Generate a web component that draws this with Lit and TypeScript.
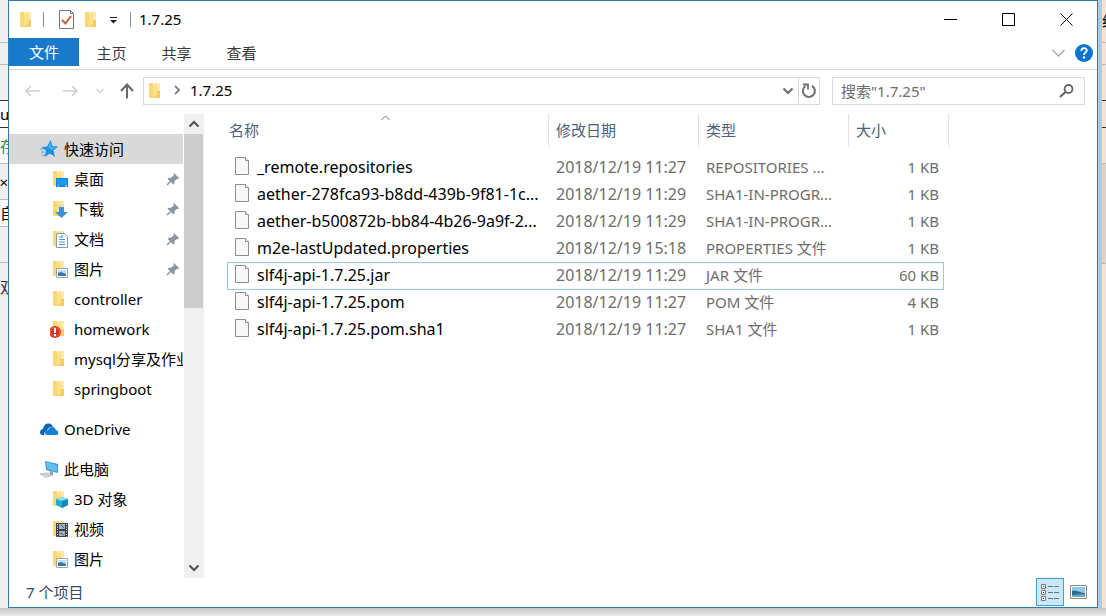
import { LitElement, html, css, svg, nothing } from "lit";
import { customElement, state } from "lit/decorators.js";

type NavItem = { label: string; icon: string; root?: boolean; pinned?: boolean; gap?: boolean };
type FileRow = { name: string; date: string; type: string; size: string };

const NAV: NavItem[] = [
  { label: "快速访问", icon: "star", root: true },
  { label: "桌面", icon: "desktop", pinned: true },
  { label: "下载", icon: "download", pinned: true },
  { label: "文档", icon: "document", pinned: true },
  { label: "图片", icon: "picture", pinned: true },
  { label: "controller", icon: "folder" },
  { label: "homework", icon: "alert" },
  { label: "mysql分享及作业", icon: "folder" },
  { label: "springboot", icon: "folder" },
  { label: "OneDrive", icon: "cloud", root: true, gap: true },
  { label: "此电脑", icon: "pc", root: true, gap: true },
  { label: "3D 对象", icon: "cube" },
  { label: "视频", icon: "film" },
  { label: "图片", icon: "picture" },
];

const FILES: FileRow[] = [
  { name: "_remote.repositories", date: "2018/12/19 11:27", type: "REPOSITORIES ...", size: "1 KB" },
  { name: "aether-278fca93-b8dd-439b-9f81-1c...", date: "2018/12/19 11:29", type: "SHA1-IN-PROGR...", size: "1 KB" },
  { name: "aether-b500872b-bb84-4b26-9a9f-2...", date: "2018/12/19 11:29", type: "SHA1-IN-PROGR...", size: "1 KB" },
  { name: "m2e-lastUpdated.properties", date: "2018/12/19 15:18", type: "PROPERTIES 文件", size: "1 KB" },
  { name: "slf4j-api-1.7.25.jar", date: "2018/12/19 11:29", type: "JAR 文件", size: "60 KB" },
  { name: "slf4j-api-1.7.25.pom", date: "2018/12/19 11:27", type: "POM 文件", size: "4 KB" },
  { name: "slf4j-api-1.7.25.pom.sha1", date: "2018/12/19 11:27", type: "SHA1 文件", size: "1 KB" },
];

const folderShape = svg`
  <path d="M3 1h11v15H3z" fill="#ffe9a6"/>
  <path d="M3 1h4v15H3z" fill="#f8d775"/>
  <path d="M7 4l4-3v12l-4 3z" fill="#ffe08a"/>
  <path d="M11 9h3v7H7l4-3z" fill="#f3cc66"/>`;

const GLYPHS: Record<string, unknown> = {
  folder: folderShape,
  star: svg`<path d="M10.500 0l2 6 5.500.5-4.500 4 1.500 6.500-5-3.500L4.500 17l1.600-6.300L1.500 7l5.700-.6z" fill="#1c8fe3"/><path d="M10.300 2.500l1.400 4.500 4 .3-3.500 2.700-4.200-3z" fill="#4db4f5"/><path d="M0 9h4M1 12h4M2 15h3" stroke="#4aa6ea"/>`,
  desktop: svg`${folderShape}<path d="M6 8h12v9H6z" fill="#1286dc"/><path d="M7 9h10v6H7z" fill="#1b9af0"/><path d="M8 16h1M15 16h2" stroke="#fff"/>`,
  download: svg`${folderShape}<path d="M9 7h5v5h4l-6.500 6L5 12h4z" fill="#3b8fe0"/>`,
  document: svg`${folderShape}<path d="M6.500 3.500h8l3 3v11h-11z" fill="#fff" stroke="#8a9bab"/><path d="M9 7h3M9 9.500h6M9 12h6M9 14.500h6M12 5v3" stroke="#4a94d0"/>`,
  picture: svg`${folderShape}<path d="M6.500 8.500h11v9h-11z" fill="#fff" stroke="#9aa4ad"/><path d="M8 10h8v6H8z" fill="#b9e0f6"/><path d="M8 13l3-1 5 2v2H8z" fill="#3b78a8"/>`,
  alert: svg`${folderShape}<circle cx="5" cy="12" r="6" fill="#d5301f"/><circle cx="5" cy="12" r="4.500" fill="none" stroke="#ee6a4e"/><path d="M5 8v5M5 14v2" stroke="#fff" stroke-width="2"/>`,
  cloud: svg`<path d="M0 12.500c0-2 1.500-3.500 3-3.500.5-4 3-6 6-5.500 2 .2 3.300 1.500 4 3-4 .2-5.500 2-5.800 4.500C4.500 11 4 13.500 4.500 15 2 15.500 0 14.500 0 12.500z" fill="#0a64b4"/><path d="M5 13c0-1.800 1.500-3 3.200-3C8.600 8 10 7 12 7c2 0 3.500 1.200 3.800 3.200 1.500.1 2.700 1.100 2.700 2.500 0 1.500-1 2.300-2.500 2.300H7.500C6 15 5 14.200 5 13z" fill="#1380d8"/>`,
  pc: svg`<path d="M5 1l13 3v9L6 10z" fill="#3d8fc9"/><path d="M6 2l11 3v7L7 9z" fill="#62c0f2"/><path d="M10 11l3 1v3h-3z" fill="#8d9ba5"/><path d="M0 14l8-1 5 2-7 2.500z" fill="#e6e9ec" stroke="#9ba5ad" stroke-width=".7"/><path d="M3 14.500l6 .8M6 14l4 1.300" stroke="#aab4bb" stroke-width=".6"/>`,
  cube: svg`${folderShape}<path d="M6 9l6-2 6 2v6l-6 3-6-3z" fill="#25a9d4"/><path d="M6 9l6-2 6 2-6 2z" fill="#8be2f4"/><path d="M12 11v7l6-3V9z" fill="#138bb8"/>`,
  film: svg`${folderShape}<path d="M6 3h12v14H6z" fill="#3b3e43"/><path d="M9 4h6v5H9zM9 11h6v5H9z" fill="#9fb2c4"/><path d="M11 5l3 3M10 13l4 2" stroke="#4d6479"/><path d="M7.500 4v13M16.500 4v13" stroke="#fff" stroke-dasharray="1 1.500"/>`,
};

const icon = (name: string) => html`<svg class="ico" viewBox="0 0 18 18" aria-hidden="true">${GLYPHS[name]}</svg>`;

const pin = html`<svg class="pin" viewBox="0 0 14 14" aria-hidden="true">
  <path d="M8 1l5 5-1 1.200-1.200-.3L8.500 9v2.500L7.400 12.500 1.600 6.700l1-1H5L8 3.200 7.400 1.700z" fill="#8b959d"/><path d="M4.500 9.500L1 13" stroke="#8b959d" stroke-width="1.500"/></svg>`;

const page = html`<svg class="page" viewBox="0 0 16 20" aria-hidden="true">
  <path d="M1.500.5h10l3 3v14h-13z" fill="#f8f8f8" stroke="#8f8f8f"/><path d="M11.500.5v3h3" fill="#fff" stroke="#8f8f8f"/></svg>`;

@customElement("app-root")
export class AppRoot extends LitElement {
  @state() private current = "快速访问";
  @state() private focused = "slf4j-api-1.7.25.jar";

  static styles = css`
    :host {
      display: grid;
      grid-template-columns: 8px minmax(0, 1fr) 8px;
      grid-template-rows: minmax(0, 1fr) 8px;
      height: 100vh;
      overflow: hidden;
      background: #e4e5e7;
      font: 15px/20px "Noto Sans", "Noto Sans CJK SC", sans-serif;
      color: #000;
    }
    * { box-sizing: border-box; }
    button, a, input { font: inherit; color: inherit; }
    button { border: 0; padding: 0; background: none; display: flex; align-items: center; justify-content: center; }
    a { text-decoration: none; }
    svg { display: block; flex: none; fill: none; }
    ul { list-style: none; margin: 0; padding: 0; }
    .edge { overflow: hidden; background: #efeff0; display: flex; flex-direction: column; }
    .edge.right { background: #efe3dc; border-left: 4px solid #b5c9d9; }
    .edge.bottom { grid-column: 1 / -1; background: linear-gradient(#c3c5c7, #ececec); }
    .strip { height: 36px; flex: none; overflow: hidden; white-space: nowrap; border-bottom: 1px solid #b9bdc1; display: flex; align-items: center; }
    .strip.first { height: 43px; }
    .strip.short { height: 22px; }
    .strip.mid { height: 27px; }
    .strip.tall { height: 48px; }
    .strip.long { height: 100px; background: #dcd3d0; }
    .strip.white { background: #fafafa; }
    .strip.dark { border-bottom-color: #333; }
    .strip.green { color: #2f8b3a; }
    .strip.last { border: 0; color: #352446; }
    .strip.end { justify-content: flex-end; }

    .window { border: 1px solid #2f7db0; background: #fff; display: flex; flex-direction: column; min-width: 0; min-height: 0; }
    .title { display: flex; align-items: center; height: 37px; flex: none; padding: 0 2px 0 8px; }
    .title h1 { font: inherit; margin: 0 auto 0 8px; padding-bottom: 2px; }
    .ico { width: 18px; height: 18px; }
    .bar { width: 1px; height: 15px; background: #8d8d8d; }
    .quick { display: flex; align-items: center; }
    .quick .bar { margin: 0 14px 0 8px; }
    .quick .more { width: 24px; margin-right: 5px; }
    .caption { width: 58px; height: 37px; }

    .tabs { display: flex; height: 32px; flex: none; border-bottom: 1px solid #dadbdc; padding-right: 4px; align-items: flex-start; }
    .tab { height: 29px; width: 65px; color: #383838; }
    .tab.file { height: 28px; width: 70px; background: #1979ca; color: #fff; }
    .tabs .fold { margin-left: auto; width: 18px; height: 30px; margin-right: 8px; }
    .tabs .help { height: 30px; }

    .address { display: flex; flex: none; height: 44px; padding: 7px 12px 9px 6px; align-items: stretch; }
    .move { width: 35px; }
    .move.wide { width: 40px; }
    .move.thin { width: 20px; }
    .move.up { width: 33px; }
    .path { flex: 1; min-width: 0; display: flex; align-items: center; border: 1px solid #d9d9d9; padding-left: 2px; }
    .path .crumb { margin-left: 9px; padding-bottom: 2px; }
    .path .arrow { margin-left: 10px; margin-bottom: 2px; }
    .path .drop { margin-left: auto; width: 20px; height: 26px; }
    .path .reload { width: 21px; height: 26px; border-left: 1px solid #d9d9d9; }
    .search { width: 253px; margin-left: 12px; display: flex; align-items: center; border: 1px solid #d9d9d9; padding: 0 10px 0 8px; }
    .search input { flex: 1; min-width: 0; border: 0; padding: 0; outline: 0; background: none; }
    .search input::placeholder { color: #6d6d6d; opacity: 1; }

    .main { flex: 1; min-height: 0; display: flex; }
    .side { width: 195px; flex: none; display: flex; }
    .tree { flex: 1; min-width: 0; overflow: hidden; padding: 20px 1px 0 0; }
    .tree .gap { margin-top: 10px; }
    .node { display: flex; align-items: center; height: 30px; padding-left: 41px; gap: 6px; white-space: nowrap; overflow: hidden; }
    .node.root { padding-left: 31px; }
    .node.current { background: #d9d9d9; }
    .node .pin { margin-left: auto; margin-right: 3px; }
    .pin { width: 14px; height: 14px; }
    .scroll { width: 20px; flex: none; background: #f0f0f0; display: flex; flex-direction: column; }
    .scroll button { height: 20px; width: 20px; }
    .thumb { width: 19px; height: 174px; background: #cdcdcd; margin-bottom: auto; }

    .files { flex: 1; min-width: 0; overflow: hidden; padding-left: 23px; }
    table, thead, tbody { display: block; }
    tr { display: grid; cursor: default; }
    thead tr { height: 33px; grid-template-columns: 322px 150px 150px 100px; margin-bottom: 7px; }
    th { font-weight: normal; text-align: left; color: #4c607a; padding: 6px 7px 0; border-right: 1px solid #e3e3e3; }
    th:first-child { padding-left: 2px; display: grid; grid-template-columns: 152px 1fr; }
    .sort { align-self: start; margin-top: -5px; }
    tbody tr { width: 717px; height: 27px; align-items: center; border: 1px solid transparent; grid-template-columns: 321px 150px 150px 1fr; }
    tbody tr.focused { height: 28px; margin-bottom: -1px; border-color: #99c9ea; }
    td { padding: 0 0 2px 7px; color: #6d6d6d; white-space: nowrap; }
    td:first-child { color: #000; display: flex; align-items: center; gap: 7px; padding-left: 6px; }
    td:first-child, td:nth-child(2) { font-size: 16px; }
    td:last-child { text-align: right; padding-right: 4px; }
    .page { width: 16px; height: 20px; }

    .status { flex: none; height: 29px; display: flex; align-items: flex-start; padding: 0 5px 0 17px; color: #33496a; }
    .status span { padding-top: 4px; }
    .status .view { width: 28px; height: 28px; border: 1px solid transparent; }
    .status .view.on { background: #cbe8f8; border-color: #3fa0d0; margin-left: auto; }
  `;

  render() {
    return html`
      <div class="edge" aria-hidden="true">
        <div class="strip first"></div>
        <div class="strip short"></div>
        <div class="strip dark"></div>
        <div class="strip mid dark white">u</div>
        <div class="strip green white">存</div>
        <div class="strip end">×</div>
        <div class="strip mid white">自</div>
        <div class="strip"></div>
        <div class="strip tall last">双</div>
      </div>
      <main class="window">
        <header class="title">
          <div class="quick">
            ${icon("folder")}
            <span class="bar"></span>
            <button aria-label="属性">
              <svg width="17" height="19" viewBox="0 0 17 19"><path d="M1.500.5h11l3 3v15h-14z" fill="#fff" stroke="#777"/><path d="M12.500.5v3h3" stroke="#777"/><path d="M4 10l3.500 3.500L13 6" stroke="#c65f38" stroke-width="2"/></svg>
            </button>
            <button aria-label="新建文件夹"><svg width="26" height="18" viewBox="-7 0 26 18">${folderShape}</svg></button>
            <button class="more" aria-label="自定义快速访问工具栏">
              <svg width="9" height="8" viewBox="0 0 9 8"><path d="M1 1.500h7" stroke="#222"/><path d="M1 4h7L4.500 7.500z" fill="#222"/></svg>
            </button>
          </div>
          <span class="bar"></span>
          <h1>1.7.25</h1>
          <button class="caption" aria-label="最小化"><svg width="13" height="13"><path d="M0 6.500h13" stroke="#000"/></svg></button>
          <button class="caption" aria-label="最大化"><svg width="13" height="13"><path d="M.5.5h12v12H.5z" stroke="#000"/></svg></button>
          <button class="caption" aria-label="关闭"><svg width="13" height="13"><path d="M.5.5l12 12M12.500.5l-12 12" stroke="#000"/></svg></button>
        </header>
        <nav class="tabs">
          <button class="tab file">文件</button>
          <button class="tab">主页</button>
          <button class="tab">共享</button>
          <button class="tab">查看</button>
          <button class="fold" aria-label="展开功能区"><svg width="13" height="8"><path d="M.5 1l6 6 6-6" stroke="#a5a9ad" stroke-width="1.400"/></svg></button>
          <button class="help" aria-label="帮助">
            <svg width="18" height="18"><circle cx="9" cy="9" r="9" fill="#0c73cf"/><path d="M6.300 7c0-4 5.500-3.500 5.500-.6C11.800 8.400 9 8.500 9 11" stroke="#fff" stroke-width="1.800"/><circle cx="9" cy="13.500" r="1.200" fill="#fff"/></svg>
          </button>
        </nav>
        <div class="address">
          <button class="move" aria-label="后退"><svg width="15" height="12"><path d="M15 6H1M6 1L1 6l5 5" stroke="#cfcfcf" stroke-width="1.500"/></svg></button>
          <button class="move wide" aria-label="前进"><svg width="15" height="12"><path d="M0 6h14M9 1l5 5-5 5" stroke="#cfcfcf" stroke-width="1.500"/></svg></button>
          <button class="move thin" aria-label="最近浏览的位置"><svg width="8" height="6"><path d="M.5 1L4 4.500 7.500 1" stroke="#cfcfcf" stroke-width="1.500"/></svg></button>
          <button class="move up" aria-label="向上"><svg width="16" height="16"><path d="M8 15.500V2M2 8l6-6.500L14 8" stroke="#6a6a6a" stroke-width="2"/></svg></button>
          <div class="path">
            ${icon("folder")}
            <svg class="arrow" width="7" height="10"><path d="M1 1l4 4-4 4" stroke="#6a6a6a" stroke-width="1.600"/></svg>
            <button class="crumb">1.7.25</button>
            <button class="drop" aria-label="以前的位置"><svg width="12" height="8"><path d="M1.500 1.500L6 6l4.500-4.500" stroke="#6a6a6a" stroke-width="2"/></svg></button>
            <button class="reload" aria-label="刷新"><svg width="16" height="16"><path d="M11 2.800A6 6 0 1 1 4.500 3" stroke="#6f6f6f" stroke-width="2"/><path d="M2 1.500h5v5" stroke="#6f6f6f" stroke-width="1.800"/></svg></button>
          </div>
          <div class="search">
            <input type="text" aria-label="搜索" placeholder='搜索"1.7.25"' />
            <svg width="15" height="14"><circle cx="9.500" cy="5" r="4" stroke="#666" stroke-width="1.800"/><path d="M6.500 8L1 13" stroke="#666" stroke-width="2.200"/></svg>
          </div>
        </div>
        <div class="main">
          <div class="side">
            <ul class="tree">
              ${NAV.map((n) => html`
                <li class=${n.gap ? "gap" : ""}>
                  <a href="#" class="node ${n.root ? "root" : ""} ${n.label === this.current ? "current" : ""}"
                    @click=${() => (this.current = n.label)}>
                    ${icon(n.icon)}<span>${n.label}</span>${n.pinned ? pin : nothing}
                  </a>
                </li>`)}
            </ul>
            <div class="scroll">
              <button aria-label="向上滚动"><svg width="12" height="8"><path d="M1.500 6.500L6 2l4.500 4.500" stroke="#505050" stroke-width="2"/></svg></button>
              <div class="thumb"></div>
              <button aria-label="向下滚动"><svg width="12" height="8"><path d="M1.500 1.500L6 6l4.500-4.500" stroke="#505050" stroke-width="2"/></svg></button>
            </div>
          </div>
          <div class="files">
            <table>
              <thead>
                <tr>
                  <th>名称<svg class="sort" width="9" height="6"><path d="M.5 5l4-4 4 4" stroke="#777"/></svg></th>
                  <th>修改日期</th><th>类型</th><th>大小</th>
                </tr>
              </thead>
              <tbody>
                ${FILES.map((f) => html`
                  <tr class=${f.name === this.focused ? "focused" : ""} @click=${() => (this.focused = f.name)}>
                    <td>${page}<span>${f.name}</span></td><td>${f.date}</td><td>${f.type}</td><td>${f.size}</td>
                  </tr>`)}
              </tbody>
            </table>
          </div>
        </div>
        <footer class="status">
          <span>7 个项目</span>
          <button class="view on" aria-label="详细信息">
            <svg width="18" height="17"><path d="M.5.500h4v4h-4zM.5 6.500h4v4h-4zM.5 12.500h4v4h-4z" fill="#fff" stroke="#777"/><path d="M2 2.500h1M2 8.500h1M2 14.500h1" stroke="#222"/><path d="M7 2.500h5M13 2.500h5M7 8.500h5M13 8.500h5M7 14.500h5M13 14.500h5" stroke="#667680"/></svg>
          </button>
          <button class="view" aria-label="大图标">
            <svg width="17" height="14"><path d="M.5.500h16v13H.5z" fill="#fff" stroke="#888"/><path d="M2 2h13v10H2z" fill="#8fc6ea"/><path d="M2 6c4-2 8 2 13 2v4H2z" fill="#2f6b86"/><path d="M2 10l13-1v3H2z" fill="#6fa3c6"/></svg>
          </button>
        </footer>
      </main>
      <div class="edge right" aria-hidden="true">
        <div class="strip first">经</div>
        <div class="strip short"></div>
        <div class="strip dark"></div>
        <div class="strip mid dark"></div>
        <div class="strip"></div>
        <div class="strip long"></div>
      </div>
      <div class="edge bottom"></div>
    `;
  }
}
